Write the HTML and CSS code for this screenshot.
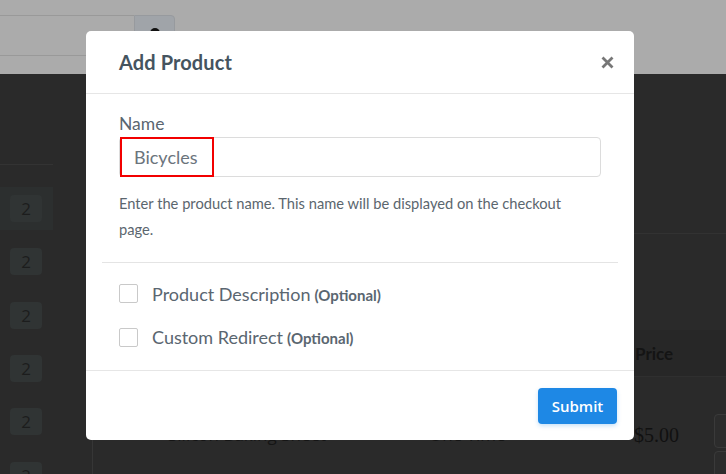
FILE: index.html
```html
<!DOCTYPE html>
<html>
<head>
<meta charset="utf-8">
<link rel="stylesheet" href="styles.css">
</head>
<body>
<div class="page">
  <header class="topbar">
    <div class="search">
      <div class="search-input"></div>
      <div class="search-btn"><span class="search-icon"></span></div>
    </div>
  </header>
  <div class="main">
    <aside class="sidebar">
      <div class="side-head"></div>
      <ul class="side-list">
        <li class="side-row active"><span class="badge">2</span></li>
        <li class="side-row"><span class="badge">2</span></li>
        <li class="side-row"><span class="badge">2</span></li>
        <li class="side-row"><span class="badge">2</span></li>
        <li class="side-row"><span class="badge">2</span></li>
        <li class="side-row"><span class="badge">2</span></li>
      </ul>
    </aside>
    <section class="content">
      <div class="panel">
        <div class="panel-top"></div>
        <div class="thead"><span class="th-price">Price</span></div>
        <div class="trow">
          <span class="dot"></span>
          <span class="td-name">Silicon Baking Sheet</span>
          <span class="td-type">One Time</span>
          <span class="td-price">$5.00</span>
          <span class="td-actions"><span class="act"></span><span class="act"></span></span>
        </div>
      </div>
    </section>
  </div>
</div>

<div class="modal">
  <div class="modal-header">
    <h4 class="modal-title">Add Product</h4>
    <svg class="modal-close" width="13" height="13" viewBox="0 0 13 13" aria-label="close">
      <path d="M1.5 1.5 L11.5 11.5 M11.5 1.5 L1.5 11.5" stroke="#777" stroke-width="2.8" stroke-linecap="butt" fill="none"/>
    </svg>
  </div>
  <div class="modal-body">
    <div class="field">
      <label class="field-label">Name</label>
      <div class="input-box">
        <span class="input-value">Bicycles</span>
      </div>
      <p class="help">Enter the product name. This name will be displayed on the checkout page.</p>
    </div>
    <div class="divider"></div>
    <div class="options">
      <div class="opt"><span class="check"></span><span class="opt-label">Product Description</span> <span class="opt-note">(Optional)</span></div>
      <div class="opt"><span class="check"></span><span class="opt-label">Custom Redirect</span> <span class="opt-note">(Optional)</span></div>
    </div>
  </div>
  <div class="modal-footer">
    <button class="btn-submit">Submit</button>
  </div>
</div>
</body>
</html>
```

FILE: styles.css
```css
* { box-sizing: border-box; }
html, body {
  margin: 0;
  padding: 0;
}
body {
  width: 726px;
  height: 474px;
  overflow: hidden;
  position: relative;
  background: #2a2a2a;
  font-family: Lato, "Open Sans", sans-serif;
}

/* ---------- dimmed background page ---------- */
.page {
  display: flex;
  flex-direction: column;
  height: 474px;
}
.topbar {
  height: 74px;
  background: #ababab;
  padding-top: 15px;
  flex: none;
}
.search {
  display: flex;
  height: 41px;
}
.search-input {
  width: 134px;
  border-top: 1px solid #999;
  border-bottom: 1px solid #999;
}
.search-btn {
  width: 41px;
  background: #a0a4a9;
  border: 1px solid #979a9e;
  border-radius: 0 4px 4px 0;
  display: flex;
  justify-content: center;
  padding-top: 12px;
}
.search-icon {
  width: 10px;
  height: 10px;
  border-radius: 50%;
  background: #111;
}
.main {
  flex: 1;
  display: flex;
}
.sidebar {
  width: 53px;
  flex: none;
}
.side-head {
  height: 91px;
  border-bottom: 1px solid #333;
}
.side-list {
  list-style: none;
  margin: 0;
  padding: 17px 0 0;
}
.side-row {
  height: 53.3px;
  display: flex;
  align-items: center;
  padding-left: 10px;
}
.side-row.active {
  background: #2c2f2f;
  height: 43px;
  margin: 5px 0 5.3px;
}
.badge {
  width: 32px;
  height: 27px;
  border-radius: 4px;
  background: #303434;
  color: #1c1d1d;
  font-family: "Open Sans", sans-serif;
  font-size: 17px;
  display: flex;
  align-items: center;
  justify-content: center;
}
.content {
  flex: 1;
  padding-left: 39px;
}
.panel {
  height: 100%;
  border-left: 1px solid #363636;
}
.panel-top {
  height: 160px;
  border-bottom: 1px solid #323232;
}
.thead {
  margin-top: 96px;
  height: 47px;
  background: #272727;
  border-bottom: 1px solid #2f2f2f;
  display: flex;
  align-items: center;
  padding-left: 542px;
}
.th-price {
  font-family: Lato, sans-serif;
  font-weight: 700;
  font-size: 17px;
  color: #141414;
}
.trow {
  display: flex;
  align-items: flex-start;
  height: 120px;
  padding-left: 55px;
  padding-top: 46px;
}
.dot {
  width: 8px;
  height: 8px;
  border-radius: 50%;
  background: #1e3a1e;
  margin: 8px 12px 0 0;
}
.td-name {
  font-family: "Open Sans", sans-serif;
  font-size: 17px;
  line-height: 24px;
  color: #151515;
  width: 261px;
}
.td-type {
  font-family: "Open Sans", sans-serif;
  font-size: 17px;
  line-height: 24px;
  color: #151515;
  width: 205px;
}
.td-price {
  font-family: "Liberation Serif", serif;
  font-size: 20px;
  line-height: 24px;
  color: #111;
  width: 80px;
}
.td-actions {
  display: flex;
  flex-direction: column;
  gap: 3px;
  margin-top: -9px;
}
.act {
  width: 30px;
  height: 34px;
  border: 1px solid #3a3a3a;
  border-radius: 4px;
  background: #2c2c2c;
}

/* ---------- modal ---------- */
.modal {
  position: absolute;
  left: 86px;
  top: 31px;
  width: 548px;
  height: 409px;
  background: #fff;
  border-radius: 5px;
  display: flex;
  flex-direction: column;
}
.modal-header {
  height: 63px;
  border-bottom: 1px solid #e6e6e6;
  display: flex;
  align-items: center;
  justify-content: space-between;
  padding: 0 20px 0 33px;
  flex: none;
}
.modal-title {
  margin: 0;
  font-size: 20px;
  font-weight: 700;
  color: #45545f;
  letter-spacing: 0.1px;
}
.modal-close {
  display: block;
}
.modal-body {
  padding: 20px 16px 0;
  flex: 1;
}
.field {
  padding: 0 17px;
}
.field-label {
  display: block;
  font-size: 17.5px;
  line-height: 20px;
  color: #5a6670;
}
.input-box {
  margin-top: 3px;
  height: 40px;
  border: 1px solid #dcdcdc;
  border-radius: 4px;
  display: flex;
  align-items: center;
}
.input-value {
  height: 40px;
  margin: -1px 0 0 0;
  width: 94px;
  border: 2px solid #f20000;
  padding-left: 12px;
  display: flex;
  align-items: center;
  font-size: 18px;
  color: #6b747c;
}
.help {
  margin: 13px 0 0;
  max-width: 470px;
  font-size: 14.7px;
  line-height: 26px;
  color: #5b666e;
}
.divider {
  margin-top: 20px;
  height: 1px;
  background: #e4e4e4;
}
.options {
  padding: 9px 17px 0;
}
.opt {
  height: 43.5px;
  display: flex;
  align-items: center;
}
.check {
  width: 19px;
  height: 19px;
  border: 1px solid #c9c9c9;
  border-radius: 2px;
  margin-right: 14px;
  flex: none;
}
.opt-label {
  font-size: 18px;
  color: #5a6670;
}
.opt-note {
  font-size: 15px;
  font-weight: 700;
  color: #5a6670;
  margin-left: 4px;
  padding-top: 2px;
}
.modal-footer {
  height: 70px;
  border-top: 1px solid #e6e6e6;
  display: flex;
  justify-content: flex-end;
  align-items: flex-start;
  padding: 17px 17px 0 0;
  flex: none;
}
.btn-submit {
  height: 36px;
  width: 79px;
  border: none;
  border-radius: 4px;
  background: #1e88e5;
  color: #fff;
  font-family: "Open Sans", sans-serif;
  font-weight: 600;
  font-size: 15px;
  box-shadow: 0 2px 4px rgba(30, 136, 229, 0.25);
  padding: 0;
}
```
